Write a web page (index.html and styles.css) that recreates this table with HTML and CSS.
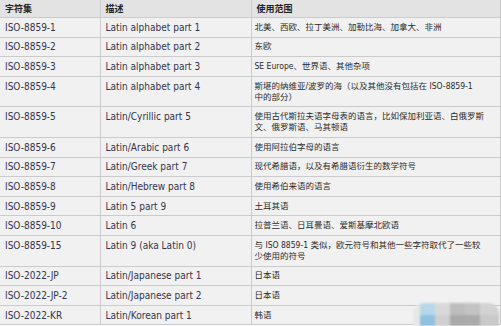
FILE: index.html
```html
<!DOCTYPE html>
<html lang="zh">
<head>
<meta charset="utf-8">
<link rel="stylesheet" href="styles.css">
</head>
<body>
<table class="charsets">
  <colgroup><col class="c1"><col class="c2"><col class="c3"></colgroup>
  <thead>
    <tr><th>字符集</th><th>描述</th><th>使用范围</th></tr>
  </thead>
  <tbody>
    <tr><td>ISO-8859-1</td><td>Latin alphabet part 1</td><td class="zh">北美、西欧、拉丁美洲、加勒比海、加拿大、非洲</td></tr>
    <tr><td>ISO-8859-2</td><td>Latin alphabet part 2</td><td class="zh">东欧</td></tr>
    <tr><td>ISO-8859-3</td><td>Latin alphabet part 3</td><td class="zh">SE Europe、世界语、其他杂项</td></tr>
    <tr><td>ISO-8859-4</td><td>Latin alphabet part 4</td><td class="zh">斯堪的纳维亚/波罗的海（以及其他没有包括在 ISO-8859-1<br>中的部分）</td></tr>
    <tr><td>ISO-8859-5</td><td>Latin/Cyrillic part 5</td><td class="zh">使用古代斯拉夫语字母表的语言，比如保加利亚语、白俄罗斯文、俄罗斯语、马其顿语</td></tr>
    <tr><td>ISO-8859-6</td><td>Latin/Arabic part 6</td><td class="zh">使用阿拉伯字母的语言</td></tr>
    <tr><td>ISO-8859-7</td><td>Latin/Greek part 7</td><td class="zh">现代希腊语，以及有希腊语衍生的数学符号</td></tr>
    <tr><td>ISO-8859-8</td><td>Latin/Hebrew part 8</td><td class="zh">使用希伯来语的语言</td></tr>
    <tr><td>ISO-8859-9</td><td>Latin 5 part 9</td><td class="zh">土耳其语</td></tr>
    <tr><td>ISO-8859-10</td><td>Latin 6</td><td class="zh">拉普兰语、日耳曼语、爱斯基摩北欧语</td></tr>
    <tr><td>ISO-8859-15</td><td>Latin 9 (aka Latin 0)</td><td class="zh">与 ISO 8859-1 类似，欧元符号和其他一些字符取代了一些较少使用的符号</td></tr>
    <tr><td>ISO-2022-JP</td><td>Latin/Japanese part 1</td><td class="zh">日本语</td></tr>
    <tr><td>ISO-2022-JP-2</td><td>Latin/Japanese part 2</td><td class="zh">日本语</td></tr>
    <tr><td>ISO-2022-KR</td><td>Latin/Korean part 1</td><td class="zh">韩语</td></tr>
  </tbody>
</table>
<div class="watermark">
  <span class="wm edge"></span>
  <span class="wm blue"></span>
  <span class="wm g1"></span>
  <span class="wm g2"></span>
  <span class="wm g3"></span>
  <span class="wm g4"></span>
</div>
</body>
</html>
```
FILE: styles.css
```css
html, body {
  margin: 0;
  padding: 0;
  background: #ffffff;
}
body {
  position: relative;
  width: 501px;
  height: 326px;
  overflow: hidden;
}
.charsets {
  border-collapse: collapse;
  table-layout: fixed;
  width: 500px;
  font-family: "DejaVu Sans Condensed", "Liberation Sans", "Noto Sans CJK SC", sans-serif;
  font-stretch: condensed;
  font-size: 10px;
  line-height: 11px;
  color: #34344c;
}
.c1 { width: 100px; }
.c2 { width: 151px; }
.c3 { width: 249px; }
.charsets th,
.charsets td {
  border: 1px solid #cbcbcb;
  text-align: left;
  vertical-align: top;
  padding: 3.8px 4px 3.8px 5px;
}
.charsets tr > :first-child { border-left: none; }
.charsets thead th {
  border-top: none;
  background: #e3e3e3;
  padding-top: 3px;
  padding-bottom: 3px;
  font-family: "Noto Sans CJK SC", sans-serif;
  font-size: 9px;
  font-weight: bold;
  color: #222222;
}
.charsets tbody td {
  background: #f1f1f1;
}
.charsets td.zh {
  font-family: "DejaVu Sans Condensed", "Noto Sans CJK SC", sans-serif;
  font-size: 8.5px;
  padding-left: 3px;
  padding-right: 13px;
  color: #2a2a2a;
}
.watermark {
  position: absolute;
  left: 413px;
  top: 303px;
  width: 86px;
  height: 23px;
  display: flex;
  filter: blur(0.8px);
  border-radius: 10px 10px 0 0;
  overflow: hidden;
}
.wm { display: block; height: 100%; }
.edge { width: 7px; background: #e8e8e8; }
.blue { width: 15px; background: linear-gradient(#b7d8ea 0 52%, #8fc2df 52% 100%); }
.g1 { width: 15px; background: linear-gradient(#d8d8d8 0 52%, #cfcfcf 52% 100%); }
.g2 { width: 15px; background: linear-gradient(#bdbdbd 0 52%, #a9a9a9 52% 100%); }
.g3 { width: 15px; background: linear-gradient(#c3c3c3 0 52%, #ababab 52% 100%); }
.g4 { width: 19px; background: linear-gradient(#d2d2d2 0 52%, #c9c9c9 52% 100%); }
```
